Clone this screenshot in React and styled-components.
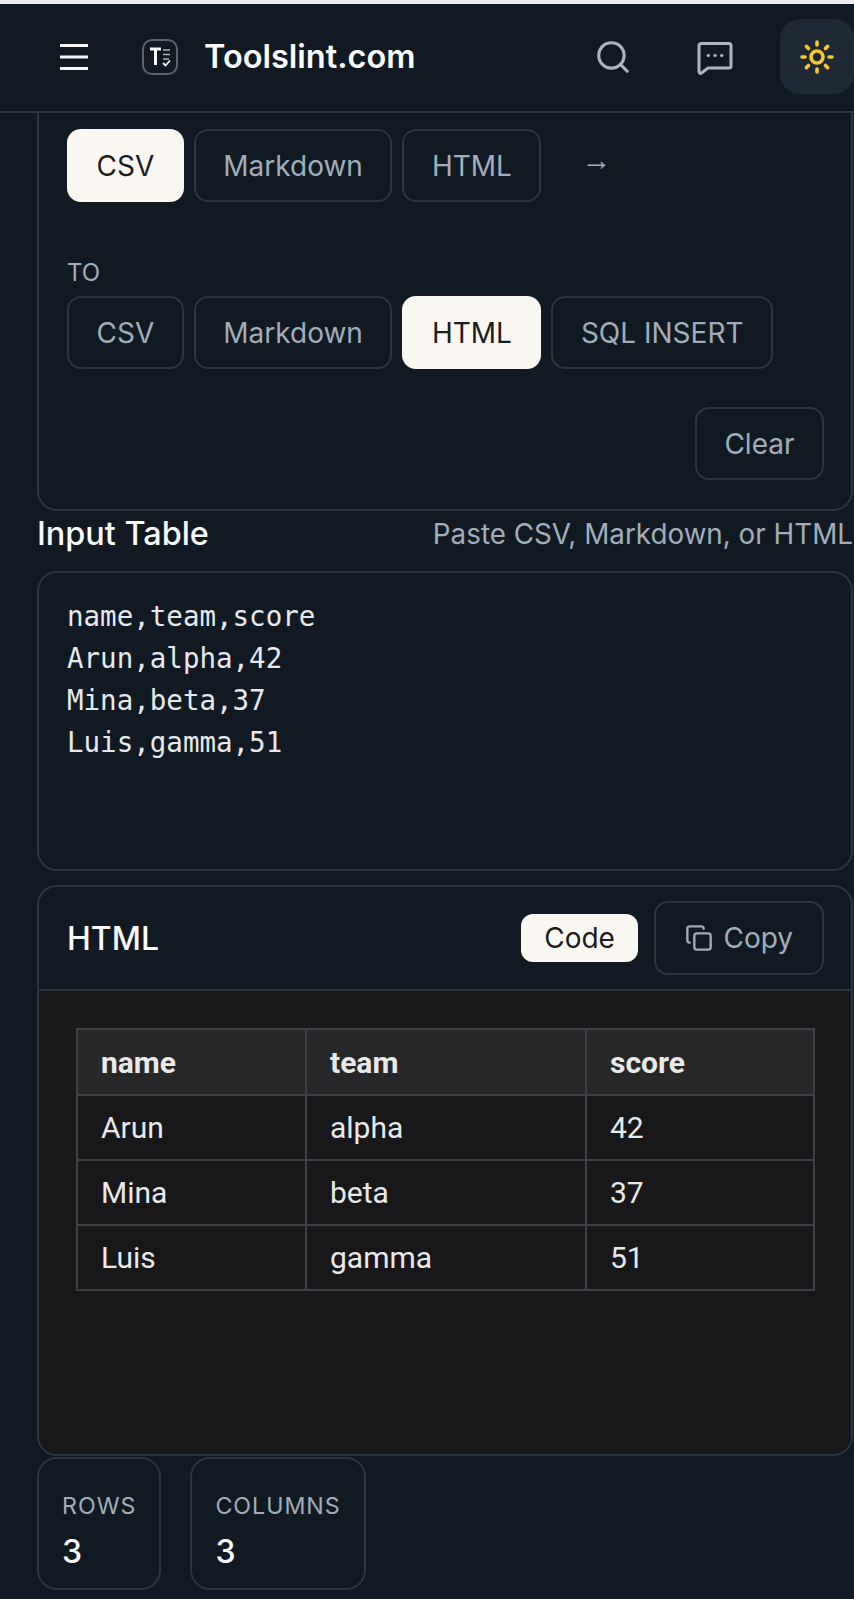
import styled, { createGlobalStyle } from "styled-components";
import { Search, Sun, Copy } from "lucide-react";

const GlobalStyle = createGlobalStyle`
  html, body {
    margin: 0;
    background-color: #111a23;
    font-family: Inter, "Noto Sans", sans-serif;
  }
  * {
    box-sizing: border-box;
  }
`;

const Page = styled.div`
  width: 854px;
  height: 1599px;
  overflow: hidden;
  background-color: #111a23;
  border-top: 4px solid #e9edf1;
`;

const Header = styled.header`
  display: flex;
  align-items: center;
  height: 109px;
  padding: 0 0 2px 59px;
  border-bottom: 2px solid #2d3541;
`;

const MenuButton = styled.div`
  display: flex;
  width: 32px;
  color: #f4f6f8;
`;

const LogoBox = styled.div`
  display: flex;
  margin-left: 51px;
  color: #f4f6f8;
`;

const Title = styled.div`
  margin-left: 26px;
  font-size: 32.5px;
  font-weight: 600;
  color: #f8fafc;
`;

const HeaderIcons = styled.div`
  display: flex;
  align-items: center;
  margin-left: auto;
`;

const IconSlot = styled.div`
  display: flex;
  justify-content: center;
  width: 102px;
  color: #aab5c0;
`;

const ThemeButton = styled.div`
  display: flex;
  align-items: center;
  justify-content: center;
  width: 74px;
  height: 75px;
  margin-left: 14px;
  border-radius: 20px;
  background-color: #1f2935;
  color: #f5c92d;
`;

const Main = styled.main`
  padding: 0 1px 0 37px;
`;

const OptionsCard = styled.section`
  height: 398px;
  padding: 16px 27px 0 28px;
  border: 2px solid #2d3541;
  border-top: none;
  border-radius: 0 0 20px 20px;
`;

const OptionRow = styled.div`
  display: flex;
  align-items: center;
  gap: 10px;
`;

const Option = styled.div`
  display: flex;
  align-items: center;
  height: 73px;
  padding: 0 27.5px;
  border: 2px solid ${(props) => (props.active ? "#faf7f2" : "#2d3541")};
  border-radius: 14px;
  background-color: ${(props) => (props.active ? "#faf7f2" : "transparent")};
  color: ${(props) => (props.active ? "#1a1c20" : "#a1adb8")};
  font-size: 28px;
`;

const Arrow = styled.div`
  margin: 0 0 12px 30px;
  font-family: "Liberation Sans", sans-serif;
  font-size: 30px;
  color: #a1adb8;
`;

const ToLabel = styled.div`
  margin: 55px 0 7px;
  font-size: 24px;
  line-height: 32px;
  color: #a1adb8;
`;

const ClearRow = styled.div`
  display: flex;
  justify-content: flex-end;
  margin-top: 38px;
`;

const SectionHead = styled.div`
  display: flex;
  align-items: center;
  justify-content: space-between;
  height: 60px;
  padding-bottom: 15px;
`;

const SectionTitle = styled.h2`
  margin: 0;
  font-size: 32.4px;
  font-weight: 500;
  color: #f8fafc;
`;

const SectionHint = styled.span`
  font-size: 27.8px;
  color: #a1adb8;
`;

const InputBox = styled.pre`
  height: 300px;
  margin: 0;
  padding: 22px 28px;
  border: 2px solid #2d3541;
  border-radius: 20px;
  font-family: "DejaVu Sans Mono", "Liberation Mono", monospace;
  font-size: 27.5px;
  line-height: 42px;
  color: #e6e9ed;
`;

const ResultCard = styled.section`
  height: 571px;
  margin-top: 14px;
  border: 2px solid #2d3541;
  border-radius: 20px;
  overflow: hidden;
`;

const ResultHead = styled.div`
  display: flex;
  align-items: center;
  height: 104px;
  padding: 0 27px 0 28px;
  border-bottom: 2px solid #2d3541;
`;

const ResultTitle = styled.h3`
  margin: 0 auto 0 0;
  font-size: 32px;
  font-weight: 500;
  color: #f8fafc;
`;

const ViewToggle = styled.div`
  display: flex;
  align-items: center;
  height: 48px;
  padding: 0 23.5px;
  border-radius: 12px;
  background-color: #faf7f2;
  color: #1a1c20;
  font-size: 28px;
`;

const CopyButton = styled(Option)`
  gap: 10px;
  height: 74px;
  margin-left: 16px;
  padding: 0 29px;
`;

const Preview = styled.div`
  height: 467px;
  padding: 37px 20px 0 37px;
  background-color: #18181a;
`;

const Table = styled.table`
  width: 737px;
  table-layout: fixed;
  border-collapse: collapse;
  font-family: Roboto, sans-serif;
  font-size: 30px;
  color: #e9e9ea;
`;

const HeadCell = styled.th`
  height: 66px;
  padding: 0 23px;
  border: 2px solid #3f3f46;
  background-color: #27272a;
  font-weight: 700;
  text-align: left;
`;

const Cell = styled.td`
  height: 65px;
  padding: 0 23px;
  border: 2px solid #3f3f46;
`;

const Stats = styled.div`
  display: flex;
  gap: 29px;
  margin-top: 1px;
`;

const Stat = styled.div`
  height: 133px;
  padding: 31px 23px 0;
  border: 2px solid #2d3541;
  border-radius: 20px;
`;

const StatLabel = styled.div`
  font-size: 23.2px;
  line-height: 32px;
  letter-spacing: 1px;
  color: #a1adb8;
`;

const StatValue = styled.div`
  margin-top: 10px;
  font-size: 32px;
  font-weight: 500;
  line-height: 40px;
  color: #f8fafc;
`;

const rows = [
  ["Arun", "alpha", "42"],
  ["Mina", "beta", "37"],
  ["Luis", "gamma", "51"],
];

function MenuIcon() {
  return (
    <svg width="30" height="26" viewBox="0 0 30 26" fill="none" stroke="currentColor" strokeWidth="3">
      <path d="M1 1.5h28M1 13h28M1 24.5h28" />
    </svg>
  );
}

function LogoIcon() {
  return (
    <svg width="36" height="36" viewBox="0 0 36 36" fill="none">
      <rect x="1" y="1" width="34" height="34" rx="9" stroke="#5b6470" strokeWidth="2" />
      <path d="M8 10h11M13.5 10v16" stroke="currentColor" strokeWidth="3" />
      <path d="M21 11h7M21 15.5h7M21 20h6" stroke="#aab5c0" strokeWidth="1.6" />
      <path d="M21 24l2.5 2.5 4.5-5" stroke="currentColor" strokeWidth="1.8" />
    </svg>
  );
}

function ChatIcon() {
  return (
    <svg width="38" height="38" viewBox="0 0 38 38" fill="none" stroke="currentColor" strokeWidth="3" strokeLinejoin="round">
      <path d="M3 7.5a2 2 0 0 1 2-2h28a2 2 0 0 1 2 2v20.5a2 2 0 0 1-2 2H12l-6.5 5a1.5 1.5 0 0 1-2.5-1z" />
      <path d="M12 17.5h.5M18.8 17.5h.5M25.5 17.5h.5" strokeLinecap="round" />
    </svg>
  );
}

function App() {
  return (
    <Page>
      <GlobalStyle />
      <Header>
        <MenuButton>
          <MenuIcon />
        </MenuButton>
        <LogoBox>
          <LogoIcon />
        </LogoBox>
        <Title>Toolslint.com</Title>
        <HeaderIcons>
          <IconSlot>
            <Search size={38} strokeWidth={2} />
          </IconSlot>
          <IconSlot>
            <ChatIcon />
          </IconSlot>
          <ThemeButton>
            <Sun size={36} strokeWidth={2.4} />
          </ThemeButton>
        </HeaderIcons>
      </Header>
      <Main>
        <OptionsCard>
          <OptionRow>
            <Option active>CSV</Option>
            <Option>Markdown</Option>
            <Option>HTML</Option>
            <Arrow>→</Arrow>
          </OptionRow>
          <ToLabel>TO</ToLabel>
          <OptionRow>
            <Option>CSV</Option>
            <Option>Markdown</Option>
            <Option active>HTML</Option>
            <Option>SQL INSERT</Option>
          </OptionRow>
          <ClearRow>
            <Option>Clear</Option>
          </ClearRow>
        </OptionsCard>
        <SectionHead>
          <SectionTitle>Input Table</SectionTitle>
          <SectionHint>Paste CSV, Markdown, or HTML</SectionHint>
        </SectionHead>
        <InputBox>{"name,team,score\nArun,alpha,42\nMina,beta,37\nLuis,gamma,51"}</InputBox>
        <ResultCard>
          <ResultHead>
            <ResultTitle>HTML</ResultTitle>
            <ViewToggle>Code</ViewToggle>
            <CopyButton>
              <Copy size={28} strokeWidth={2} />
              Copy
            </CopyButton>
          </ResultHead>
          <Preview>
            <Table>
              <colgroup>
                <col width="229" />
                <col width="280" />
                <col width="228" />
              </colgroup>
              <thead>
                <tr>
                  <HeadCell>name</HeadCell>
                  <HeadCell>team</HeadCell>
                  <HeadCell>score</HeadCell>
                </tr>
              </thead>
              <tbody>
                {rows.map((row) => (
                  <tr key={row[0]}>
                    {row.map((value) => (
                      <Cell key={value}>{value}</Cell>
                    ))}
                  </tr>
                ))}
              </tbody>
            </Table>
          </Preview>
        </ResultCard>
        <Stats>
          <Stat>
            <StatLabel>ROWS</StatLabel>
            <StatValue>3</StatValue>
          </Stat>
          <Stat>
            <StatLabel>COLUMNS</StatLabel>
            <StatValue>3</StatValue>
          </Stat>
        </Stats>
      </Main>
    </Page>
  );
}

export default App;
